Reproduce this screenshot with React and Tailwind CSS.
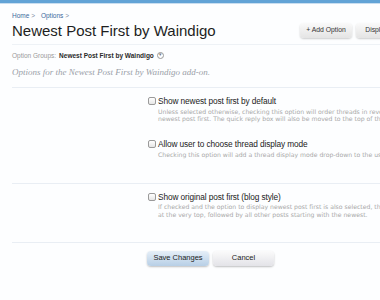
import React from 'react';

const sans = { fontFamily: '"Liberation Sans", Arial, sans-serif' };

function Checkbox() {
  return (
    <span className="mt-[1px] inline-block h-[8px] w-[8px] shrink-0 rounded-[2px] border border-[#9a9a9a] bg-gradient-to-b from-white to-[#e6e6e6]" />
  );
}

function OptionRow({ label, explain }) {
  return (
    <div className="flex items-start gap-[2px]">
      <Checkbox />
      <div>
        <div className="h-[10px] text-[8.3px] leading-[10px] text-[#222] tracking-[-0.1px]">{label}</div>
        <div
          className="mt-[1.5px] text-[6.15px] leading-[7.5px] text-[#a8a8a8] whitespace-nowrap"
          style={{ fontFamily: '"DejaVu Sans", Verdana, sans-serif' }}
        >
          {explain.map((line) => (
            <div key={line}>{line}</div>
          ))}
        </div>
      </div>
    </div>
  );
}

export default function App() {
  return (
    <div className="w-[380px] h-[300px] overflow-hidden bg-[#fdfeff]" style={sans}>
      <div className="h-[3px] bg-[#62a3d6]" />
      <div className="h-[1px] bg-[#c9def0]" />
      <div className="w-[416px] pl-[12px]">
        <div className="pt-[7px] h-[16px] text-[6.5px] leading-[9px] text-[#3a6a9c]">
          Home <span className="text-[#7a8ca0]">&gt;</span>
          <span className="ml-[6px]">Options</span> <span className="text-[#7a8ca0]">&gt;</span>
        </div>
        <div className="flex h-[25px] items-start justify-between border-b border-[#eef2f6]">
          <h1 className="text-[15px] leading-[22px] text-[#1e1e1e]">
            Newest Post First by Waindigo
          </h1>
          <div className="mt-[3px] flex gap-[4px] whitespace-nowrap">
            <button className="h-[15px] w-[52px] rounded-[4px] bg-gradient-to-b from-[#fafafa] to-[#e4e4e4] text-[6.8px] text-[#333] shadow-[0_1px_2px_rgba(0,0,0,0.2)]">
              + Add Option
            </button>
            <button className="h-[15px] w-[60px] rounded-[4px] bg-gradient-to-b from-[#fafafa] to-[#e4e4e4] text-[6.8px] text-[#333] shadow-[0_1px_2px_rgba(0,0,0,0.2)]">
              Display Order
            </button>
          </div>
        </div>
        <div className="mt-[6px] flex h-[9px] items-center text-[6.5px] leading-[9px]">
          <span className="text-[#9a9a9a]">Option Groups:</span>
          <span className="ml-[3px] font-bold text-[#2a2a2a]">Newest Post First by Waindigo</span>
          <span className="ml-[3px] flex h-[7px] w-[7px] items-center justify-center rounded-full border border-[#999] text-[4.5px] leading-none text-[#777]">
            ▾
          </span>
        </div>
        <div className="mt-[6px] h-[12px] text-[9px] italic leading-[12px] text-[#9aa0a8]" style={{ fontFamily: '"Liberation Serif", serif' }}>
          Options for the Newest Post First by Waindigo add-on.
        </div>
        <div className="mt-[9px] border-t border-[#e9eef4]" />
        <div className="flex flex-col gap-[16.5px] pl-[136px] pt-[8px] pb-[24.5px]">
          <OptionRow
            label="Show newest post first by default"
            explain={[
              'Unless selected otherwise, checking this option will order threads in reverse order, with the',
              'newest post first. The quick reply box will also be moved to the top of the thread.',
            ]}
          />
          <OptionRow
            label="Allow user to choose thread display mode"
            explain={['Checking this option will add a thread display mode drop-down to the user options.']}
          />
        </div>
        <div className="border-t border-[#e9eef4]" />
        <div className="pl-[136px] pt-[8px] pb-[23.5px]">
          <OptionRow
            label="Show original post first (blog style)"
            explain={[
              'If checked and the option to display newest post first is also selected, the first post will appear',
              'at the very top, followed by all other posts starting with the newest.',
            ]}
          />
        </div>
        <div className="border-t border-[#e9eef4]" />
        <div className="flex gap-[4px] pl-[135px] pt-[8px]">
          <button className="h-[15px] w-[62px] rounded-[4px] bg-gradient-to-b from-[#e6eff8] to-[#b7cfe6] text-[7.5px] text-[#222] shadow-[0_1px_2px_rgba(0,0,0,0.25)]">
            Save Changes
          </button>
          <button className="h-[15px] w-[61px] rounded-[4px] bg-gradient-to-b from-[#fbfbfb] to-[#e3e3e8] text-[7.5px] text-[#222] shadow-[0_1px_2px_rgba(0,0,0,0.25)]">
            Cancel
          </button>
        </div>
      </div>
    </div>
  );
}
